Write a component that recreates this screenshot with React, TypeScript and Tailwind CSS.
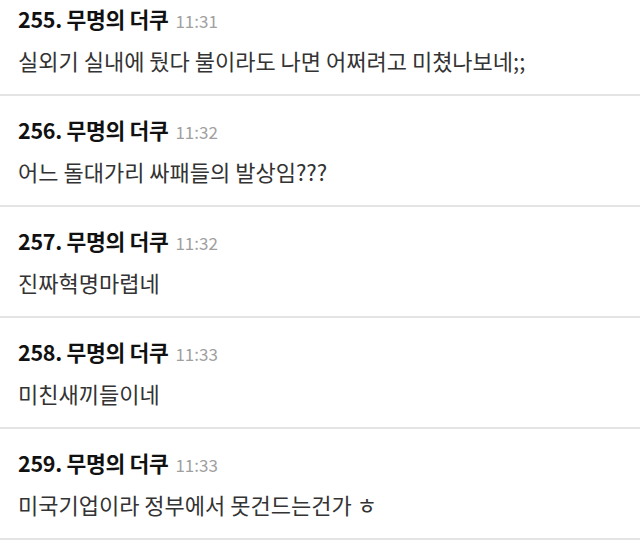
const comments = [
  { no: 255, time: '11:31', text: '실외기 실내에 뒀다 불이라도 나면 어쩌려고 미쳤나보네;;' },
  { no: 256, time: '11:32', text: '어느 돌대가리 싸패들의 발상임???' },
  { no: 257, time: '11:32', text: '진짜혁명마렵네' },
  { no: 258, time: '11:33', text: '미친새끼들이네' },
  { no: 259, time: '11:33', text: '미국기업이라 정부에서 못건드는건가 ㅎ' },
];

export default function App() {
  return (
    <div
      className="w-[640px] h-[549px] overflow-hidden bg-white"
      style={{ fontFamily: '"Noto Sans CJK KR", "Noto Sans", sans-serif' }}
    >
      {comments.map((c, i) => (
        <div
          key={c.no}
          className={`px-[18px] pb-[19px] border-b-2 border-[#e4e4e4] ${i === 0 ? 'pt-[5px]' : 'pt-[20px]'}`}
        >
          <div className="flex items-baseline gap-[7px] h-[28px] leading-[28px]">
            <span className="text-[21.5px] font-bold text-[#111] tracking-[-0.3px]">{c.no}. 무명의 더쿠</span>
            <span className="text-[17px] text-[#a0a0a0]">{c.time}</span>
          </div>
          <p className="mt-[12px] text-[22px] leading-[30px] text-[#333]">{c.text}</p>
        </div>
      ))}
    </div>
  );
}
